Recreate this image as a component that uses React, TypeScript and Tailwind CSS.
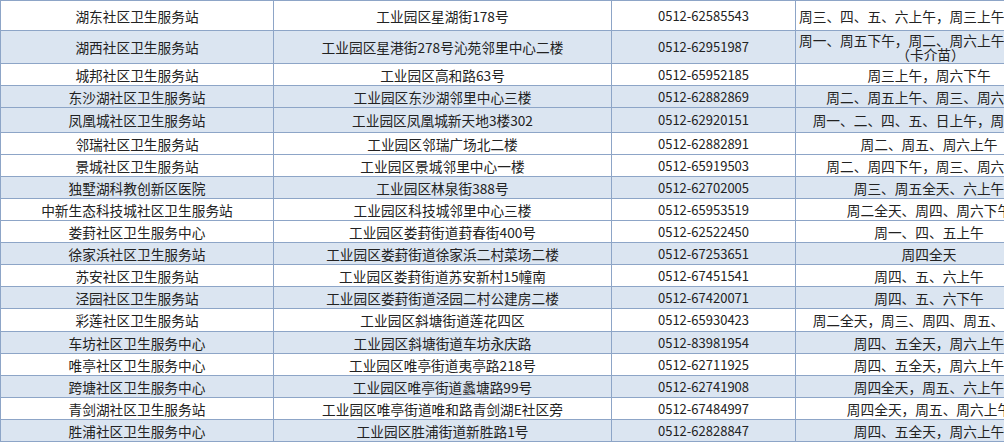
type Row = {
	name: string;
	addr: string;
	tel: string;
	time: string;
	time2?: string;
	h: string;
	blue?: boolean;
	left?: boolean;
};

const rows: Row[] = [
	{ name: "湖东社区卫生服务站", addr: "工业园区星湖街178号", tel: "0512-62585543", time: "周三、四、五、六上午，周三上午", h: "h-[30px]", left: true },
	{ name: "湖西社区卫生服务站", addr: "工业园区星港街278号沁苑邻里中心二楼", tel: "0512-62951987", time: "周一、周五下午，周二、周六上午", time2: "（卡介苗）", h: "h-[33px]", blue: true, left: true },
	{ name: "城邦社区卫生服务站", addr: "工业园区高和路63号", tel: "0512-65952185", time: "周三上午，周六下午", h: "h-[22px]" },
	{ name: "东沙湖社区卫生服务站", addr: "工业园区东沙湖邻里中心三楼", tel: "0512-62882869", time: "周二、周五上午、周三、周六下午", h: "h-[22px]", blue: true },
	{ name: "凤凰城社区卫生服务站", addr: "工业园区凤凰城新天地3楼302", tel: "0512-62920151", time: "周一、二、四、五、日上午，周六下午", h: "h-[25px]", blue: true },
	{ name: "邻瑞社区卫生服务站", addr: "工业园区邻瑞广场北二楼", tel: "0512-62882891", time: "周二、周五、周六上午", h: "h-[22px]" },
	{ name: "景城社区卫生服务站", addr: "工业园区景城邻里中心一楼", tel: "0512-65919503", time: "周二、周四下午，周三、周六上午", h: "h-[22px]" },
	{ name: "独墅湖科教创新区医院", addr: "工业园区林泉街388号", tel: "0512-62702005", time: "周三、周五全天、六上午", h: "h-[22px]", blue: true },
	{ name: "中新生态科技城社区卫生服务站", addr: "工业园区科技城邻里中心三楼", tel: "0512-65953519", time: "周二全天、周四、周六下午", h: "h-[22px]" },
	{ name: "娄葑社区卫生服务中心", addr: "工业园区娄葑街道葑春街400号", tel: "0512-62522450", time: "周一、四、五上午", h: "h-[22px]" },
	{ name: "徐家浜社区卫生服务站", addr: "工业园区娄葑街道徐家浜二村菜场二楼", tel: "0512-67253651", time: "周四全天", h: "h-[22px]", blue: true },
	{ name: "苏安社区卫生服务站", addr: "工业园区娄葑街道苏安新村15幢南", tel: "0512-67451541", time: "周四、五、六上午", h: "h-[22px]" },
	{ name: "泾园社区卫生服务站", addr: "工业园区娄葑街道泾园二村公建房二楼", tel: "0512-67420071", time: "周四、五、六下午", h: "h-[22px]", blue: true },
	{ name: "彩莲社区卫生服务站", addr: "工业园区斜塘街道莲花四区", tel: "0512-65930423", time: "周二全天，周三、周四、周五、六上午", h: "h-[23px]" },
	{ name: "车坊社区卫生服务中心", addr: "工业园区斜塘街道车坊永庆路", tel: "0512-83981954", time: "周四、五全天，周六上午", h: "h-[22px]", blue: true },
	{ name: "唯亭社区卫生服务中心", addr: "工业园区唯亭街道夷亭路218号", tel: "0512-62711925", time: "周四、五全天，周六上午", h: "h-[22px]" },
	{ name: "跨塘社区卫生服务中心", addr: "工业园区唯亭街道蠡塘路99号", tel: "0512-62741908", time: "周四全天，周五、六上午", h: "h-[22px]", blue: true },
	{ name: "青剑湖社区卫生服务站", addr: "工业园区唯亭街道唯和路青剑湖E社区旁", tel: "0512-67484997", time: "周四全天，周五、周六上午", h: "h-[22px]" },
	{ name: "胜浦社区卫生服务中心", addr: "工业园区胜浦街道新胜路1号", tel: "0512-62828847", time: "周四、五全天，周六上午", h: "h-[22px]", blue: true },
];

export default function App() {
	return (
		<div className="h-[442px] w-[1004px] overflow-hidden bg-white font-['Noto_Sans_CJK_SC',sans-serif] text-[13.7px] leading-[14px] text-[#222]">
			<div className="w-[1062px] border-t border-[#8da5c7]">
				{rows.map((r) => (
					<div
						key={r.name}
						className={`flex border-b border-l border-[#8da5c7] ${r.h} ${r.blue ? "bg-[#dbe5f1]" : "bg-white"}`}
					>
						<div className="flex w-[273px] shrink-0 items-center justify-center overflow-hidden whitespace-nowrap border-r border-[#8da5c7]">
							{r.name}
						</div>
						<div className="flex w-[338px] shrink-0 items-center justify-center overflow-hidden whitespace-nowrap border-r border-[#8da5c7]">
							{r.addr}
						</div>
						<div className="flex w-[184px] shrink-0 items-center justify-center overflow-hidden whitespace-nowrap border-r border-[#8da5c7] text-[13px]">
							{r.tel}
						</div>
						{r.left ? (
							<div className="flex w-[266px] shrink-0 flex-col justify-center overflow-hidden whitespace-nowrap pl-[3px]">
								<span>{r.time}</span>
								{r.time2 && <span className="block text-center">{r.time2}</span>}
							</div>
						) : (
							<div className="flex w-[266px] shrink-0 items-center justify-center overflow-hidden whitespace-nowrap">
								{r.time}
							</div>
						)}
					</div>
				))}
			</div>
		</div>
	);
}
